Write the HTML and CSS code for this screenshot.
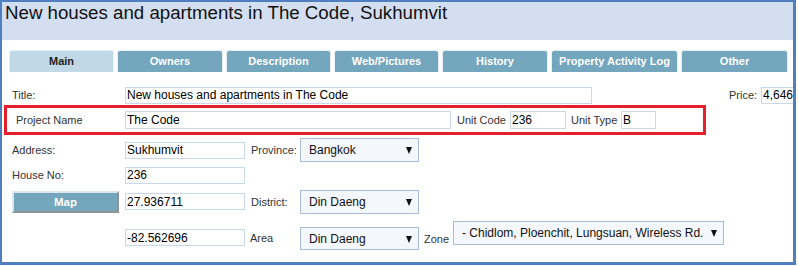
FILE: index.html
```html
<!DOCTYPE html>
<html lang="en">
<head>
    <meta charset="UTF-8">
    <title>Property - The Code</title>
    <link rel="stylesheet" href="styles.css">
</head>
<body>
    <div class="frame">
        <div class="header">
            <h1>New houses and apartments in The Code, Sukhumvit</h1>
        </div>

        <div class="tabs">
            <div class="tab active w105">Main</div>
            <div class="tab w106">Owners</div>
            <div class="tab w105">Description</div>
            <div class="tab w105">Web/Pictures</div>
            <div class="tab w106">History</div>
            <div class="tab w127">Property Activity Log</div>
            <div class="tab w107">Other</div>
        </div>

        <div class="form">
            <div class="row row-title">
                <label class="label">Title:</label>
                <input class="field w467" type="text" value="New houses and apartments in The Code">
                <label class="label-inline price-label">Price:</label>
                <input class="field w80" type="text" value="4,646,000">
            </div>

            <div class="highlight">
                <label class="label label-boxed">Project Name</label>
                <input class="field w326" type="text" value="The Code">
                <label class="label-inline unit-code">Unit Code</label>
                <input class="field w56" type="text" value="236">
                <label class="label-inline unit-type">Unit Type</label>
                <input class="field w35" type="text" value="B">
            </div>

            <div class="row row-address">
                <label class="label">Address:</label>
                <input class="field w120" type="text" value="Sukhumvit">
                <label class="label-inline side-label">Province:</label>
                <span class="select-wrap">
                    <select class="select w119"><option>Bangkok</option></select>
                </span>
            </div>

            <div class="row row-house">
                <label class="label">House No:</label>
                <input class="field w120" type="text" value="236">
            </div>

            <div class="row row-map">
                <button class="map-button">Map</button>
                <input class="field w120" type="text" value="27.936711">
                <label class="label-inline side-label">District:</label>
                <span class="select-wrap">
                    <select class="select w119"><option>Din Daeng</option></select>
                </span>
            </div>

            <div class="row row-area">
                <span class="label"></span>
                <input class="field w120 area-input" type="text" value="-82.562696">
                <label class="label-inline side-label area-label">Area</label>
                <span class="select-wrap area-select">
                    <select class="select w119"><option>Din Daeng</option></select>
                </span>
                <label class="label-inline zone-label">Zone</label>
                <span class="select-wrap zone-select">
                    <select class="select w271"><option>- Chidlom, Ploenchit, Lungsuan, Wireless Rd.</option></select>
                </span>
            </div>
        </div>
    </div>
</body>
</html>
```

FILE: styles.css
```css
body {
    margin: 0;
    font-family: "Liberation Sans", Arial, sans-serif;
    background-color: #fff;
}
.frame {
    width: 796px;
    height: 265px;
    box-sizing: border-box;
    border: 2px solid #4f7fbf;
    border-right-width: 3px;
    border-bottom-width: 3px;
    overflow: hidden;
    background-color: #fff;
}
.header {
    height: 38px;
    padding-left: 3px;
    background-color: #d3dff0;
}
.header h1 {
    margin: 0;
    font-size: 18.7px;
    font-weight: normal;
    line-height: 22px;
    color: #111;
}
.tabs {
    display: flex;
    gap: 3px;
    margin-top: 10px;
    padding-left: 7px;
}
.tab {
    height: 22px;
    box-sizing: border-box;
    border: 1px solid #e4eef3;
    border-bottom: none;
    border-radius: 3px 3px 0 0;
    background-color: #74a6bd;
    color: #fff;
    font-size: 11px;
    font-weight: bold;
    line-height: 21px;
    text-align: center;
}
.tab.active {
    background-color: #c1d9e7;
    color: #222;
}
.w105 { width: 105px; }
.w106 { width: 106px; }
.w107 { width: 107px; }
.w127 { width: 127px; }

.form {
    padding-left: 10px;
}
.row {
    display: flex;
    align-items: center;
}
.label {
    width: 113px;
    flex-shrink: 0;
    font-size: 11px;
    color: #333;
}
.label-inline {
    font-size: 11px;
    color: #333;
    flex-shrink: 0;
}
.field {
    height: 17px;
    box-sizing: border-box;
    margin: 0;
    padding: 0 0 0 1px;
    border: 1px solid #c8d8ea;
    background-color: #fff;
    font-family: "Liberation Sans", Arial, sans-serif;
    font-size: 12px;
    color: #000;
    flex-shrink: 0;
}
.w467 { width: 467px; }
.w80 { width: 80px; }
.w326 { width: 326px; height: 18px; }
.w56 { width: 56px; height: 18px; }
.w35 { width: 35px; height: 18px; }
.w120 { width: 120px; }
.w119 { width: 119px; }
.w271 { width: 271px; }

.row-title {
    margin-top: 14px;
    height: 18px;
}
.price-label {
    margin-left: 137px;
    width: 32px;
}
.highlight {
    display: flex;
    align-items: center;
    width: 702px;
    height: 30px;
    box-sizing: border-box;
    margin: 1px 0 0 -8px;
    border: 3px solid #e3202b;
}
.label-boxed {
    width: 109px;
    padding-left: 9px;
}
.unit-code {
    margin-left: 6px;
    width: 53px;
}
.unit-type {
    margin-left: 5px;
    width: 50px;
}
.row-address {
    margin-top: 3px;
    height: 24px;
}
.side-label {
    margin-left: 6px;
    width: 49px;
}
.select-wrap {
    position: relative;
    display: inline-block;
    flex-shrink: 0;
}
.select-wrap::after {
    content: "";
    position: absolute;
    right: 7px;
    top: 50%;
    margin-top: -3px;
    border-left: 3px solid transparent;
    border-right: 3px solid transparent;
    border-top: 7px solid #111;
    pointer-events: none;
}
.select {
    -webkit-appearance: none;
    appearance: none;
    display: block;
    height: 24px;
    margin: 0;
    padding: 0 0 0 8px;
    border: 1px solid #a9bdd7;
    border-radius: 0;
    background-color: #f4f7fb;
    font-family: "Liberation Sans", Arial, sans-serif;
    font-size: 12px;
    color: #111;
}
.row-house {
    margin-top: 4px;
    height: 18px;
}
.row-map {
    margin-top: 5px;
    height: 25px;
}
.map-button {
    width: 107px;
    height: 22px;
    margin: 0 6px 0 0;
    padding: 0;
    box-sizing: border-box;
    border: 2px solid;
    border-color: #dde6ec #8f9597 #8f9597 #dde6ec;
    background-color: #74a6bd;
    color: #fff;
    font-family: "Liberation Sans", Arial, sans-serif;
    font-size: 11.5px;
    font-weight: bold;
    cursor: pointer;
}
.row-area {
    margin-top: 6px;
    height: 30px;
    align-items: flex-end;
}
.area-input {
    margin-bottom: 4px;
}
.area-label {
    width: 50px;
    margin-left: 5px;
    margin-bottom: 6px;
}
.area-select .select {
    height: 23px;
}
.zone-label {
    width: 29px;
    margin-left: 5px;
    margin-bottom: 5px;
}
.zone-select {
    margin-bottom: 5px;
}
```
